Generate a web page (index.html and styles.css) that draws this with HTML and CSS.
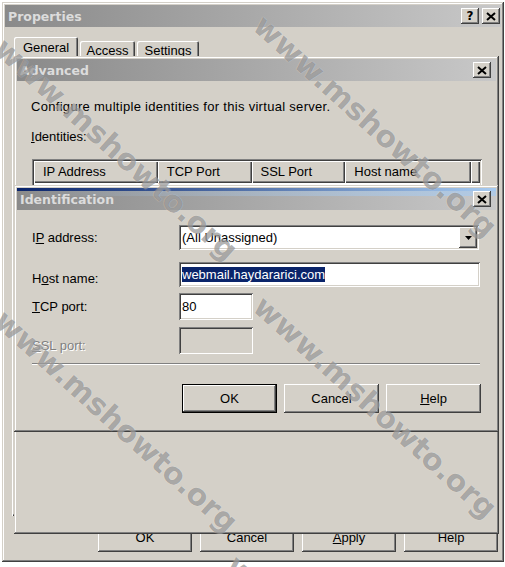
FILE: index.html
```html
<!DOCTYPE html>
<html>
<head>
<meta charset="utf-8">
<title>Properties</title>
<link rel="stylesheet" href="styles.css">
</head>
<body>
<div class="desktop">

  <div class="win win-props">
    <div class="title title-inactive title-props">
      <span class="title-text">Properties</span>
      <div class="title-btns">
        <span class="tbtn"><span class="qmark">?</span></span>
        <span class="tbtn"><svg class="xglyph" viewBox="0 0 10 9" width="10" height="9"><path d="M1 1 L9 8 M9 1 L1 8" stroke="#000" stroke-width="2" fill="none"/></svg></span>
      </div>
    </div>
    <div class="tabs">
      <div class="tab tab-sel tab-general">General</div>
      <div class="tab tab-access">Access</div>
      <div class="tab tab-settings">Settings</div>
    </div>
    <div class="tabpage"></div>
    <div class="props-btns">
      <div class="btn btn-props">OK</div>
      <div class="btn btn-props">Cancel</div>
      <div class="btn btn-props"><span><u>A</u>pply</span></div>
      <div class="btn btn-props">Help</div>
    </div>
  </div>

  <div class="win win-adv">
    <div class="title title-inactive title-sub">
      <span class="title-text">Advanced</span>
      <div class="title-btns">
        <span class="tbtn"><svg class="xglyph" viewBox="0 0 10 9" width="10" height="9"><path d="M1 1 L9 8 M9 1 L1 8" stroke="#000" stroke-width="2" fill="none"/></svg></span>
      </div>
    </div>
    <div class="adv-body">
      <div class="adv-text">Configure multiple identities for this virtual server.</div>
      <div class="adv-ident"><u>I</u>dentities:</div>
      <div class="list">
        <div class="lv-head">
          <div class="lv-col lv-ip">IP Address</div>
          <div class="lv-col lv-tcp">TCP Port</div>
          <div class="lv-col lv-ssl">SSL Port</div>
          <div class="lv-col lv-host">Host name</div>
          <div class="lv-col lv-rest"></div>
        </div>
      </div>
    </div>
  </div>

  <div class="win win-ident">
    <div class="title title-ident title-sub">
      <span class="title-text">Identification</span>
      <div class="title-btns">
        <span class="tbtn"><svg class="xglyph" viewBox="0 0 10 9" width="10" height="9"><path d="M1 1 L9 8 M9 1 L1 8" stroke="#000" stroke-width="2" fill="none"/></svg></span>
      </div>
    </div>
    <div class="form">
      <div class="row row-ip">
        <span class="lbl">I<u>P</u> address:</span>
        <div class="field combo">
          <span class="ftext">(All Unassigned)</span>
          <span class="drop"><svg viewBox="0 0 7 4" width="7" height="4"><path d="M0 0 H7 L3.5 4 Z" fill="#000"/></svg></span>
        </div>
      </div>
      <div class="row row-host">
        <span class="lbl">H<u>o</u>st name:</span>
        <div class="field host"><span class="sel">webmail.haydararici.com</span></div>
      </div>
      <div class="row row-tcp">
        <span class="lbl"><u>T</u>CP port:</span>
        <div class="field port">80</div>
      </div>
      <div class="row row-ssl">
        <span class="lbl lbl-dis"><u>S</u>SL port:</span>
        <div class="field port field-dis"></div>
      </div>
    </div>
    <div class="sep"></div>
    <div class="ident-btns">
      <div class="btn btn-ident btn-default">OK</div>
      <div class="btn btn-ident">Cancel</div>
      <div class="btn btn-ident"><span><u>H</u>elp</span></div>
    </div>
  </div>

  <div class="wm wm-a">www.mshowto.org</div>
  <div class="wm wm-b">www.mshowto.org</div>
  <div class="wm wm-c">www.mshowto.org</div>
  <div class="wm wm-d">www.mshowto.org</div>
  <div class="wm wm-e">www.mshowto.org</div>
</div>
</body>
</html>
```

FILE: styles.css
```css
* { box-sizing: border-box; }

body {
  margin: 0;
  background: #fff;
  font-family: "Liberation Sans", Arial, sans-serif;
  font-size: 13px;
  color: #000;
}

.desktop {
  position: relative;
  width: 505px;
  height: 567px;
  overflow: hidden;
  background: #fff;
}

/* ---------- windows ---------- */
.win {
  position: absolute;
  background: #d4d0c8;
  padding: 3px;
  display: flex;
  flex-direction: column;
  box-shadow:
    inset -1px -1px 0 #404040,
    inset 1px 1px 0 #d4d0c8,
    inset -2px -2px 0 #808080,
    inset 2px 2px 0 #ffffff;
}
.win-props { left: 2px; top: 2px; width: 502px; height: 560px; }
.win-adv   { left: 14px; top: 56px; width: 485px; height: 478px; }
.win-ident { left: 14px; top: 185px; width: 485px; height: 247px; }

.title {
  flex: none;
  height: 22px;
  display: flex;
  align-items: center;
  padding: 0 1px 0 3px;
}
.title-sub { padding-right: 5px; }
.title-inactive {
  background: linear-gradient(90deg, #8a8a8a, #c8c8c8);
}
.title-ident {
  background:
    linear-gradient(90deg, #0a246a, #a6caf0) top left / 100% 3px no-repeat,
    linear-gradient(90deg, rgba(166, 202, 240, 0), rgba(166, 202, 240, 0.7)) 0 3px / 100% 5px no-repeat,
    linear-gradient(90deg, #8a8a8a, #c8c8c8);
}
.title-text {
  font-family: "DejaVu Sans", sans-serif;
  font-weight: bold;
  font-size: 12.5px;
  color: #dcdcdc;
  padding-top: 1px;
}
.title-btns {
  margin-left: auto;
  display: flex;
  gap: 3px;
}
.tbtn {
  width: 18px;
  height: 16px;
  background: #d4d0c8;
  display: flex;
  align-items: center;
  justify-content: center;
  box-shadow:
    inset -1px -1px 0 #404040,
    inset 1px 1px 0 #ffffff,
    inset -2px -2px 0 #808080;
}
.qmark {
  font-family: "DejaVu Sans", sans-serif;
  font-weight: bold;
  font-size: 12px;
  line-height: 12px;
}

/* ---------- tabs ---------- */
.tabs {
  flex: none;
  display: flex;
  align-items: flex-end;
  height: 23px;
  margin: 10px 0 -2px 9px;
  gap: 2px;
}
.tab {
  height: 19px;
  display: flex;
  align-items: center;
  justify-content: center;
  border-radius: 2px 2px 0 0;
  box-shadow:
    inset 1px 1px 0 #ffffff,
    inset -1px 0 0 #404040,
    inset -2px 0 0 #808080;
}
.tab-sel { height: 23px; padding-bottom: 2px; }
.tab-general { width: 64px; }
.tab-access { width: 55px; }
.tab-settings { width: 62px; }

.tabpage {
  flex: 1;
  margin: 0 4px 0 7px;
  box-shadow:
    inset 1px 1px 0 #ffffff,
    inset -1px -1px 0 #404040,
    inset -2px -2px 0 #808080;
}

/* ---------- buttons ---------- */
.btn {
  display: flex;
  align-items: center;
  justify-content: center;
  background: #d4d0c8;
  box-shadow:
    inset -1px -1px 0 #404040,
    inset 1px 1px 0 #ffffff,
    inset -2px -2px 0 #808080;
}
.btn-props { width: 94px; height: 30px; }
.btn-ident { width: 95px; height: 29px; }
.btn-default {
  box-shadow:
    inset 0 0 0 1px #000000,
    inset -2px -2px 0 #404040,
    inset 2px 2px 0 #ffffff,
    inset -3px -3px 0 #808080;
}
.props-btns {
  flex: none;
  display: flex;
  justify-content: flex-end;
  gap: 8px;
  padding: 6px 3px 7px 0;
}

/* ---------- advanced ---------- */
.adv-body { padding: 18px 14px 0 14px; }
.adv-text { line-height: 16px; letter-spacing: 0.3px; }
.adv-ident { line-height: 16px; margin-top: 14px; }
.list {
  margin: 14px 0 0 1px;
  width: 450px;
  height: 200px;
  padding: 2px;
  background: #fff;
  box-shadow:
    inset 1px 1px 0 #808080,
    inset -1px -1px 0 #ffffff,
    inset 2px 2px 0 #404040,
    inset -2px -2px 0 #d4d0c8;
}
.lv-head { display: flex; height: 22px; }
.lv-col {
  background: #d4d0c8;
  line-height: 22px;
  padding-left: 9px;
  white-space: nowrap;
  box-shadow:
    inset 1px 1px 0 #ffffff,
    inset -1px -1px 0 #404040,
    inset -2px -2px 0 #808080;
}
.lv-ip { width: 124px; }
.lv-tcp { width: 94px; }
.lv-ssl { width: 94px; }
.lv-host { width: 126px; }
.lv-rest { flex: 1; }

/* ---------- identification ---------- */
.form {
  display: flex;
  flex-direction: column;
  padding: 15px 15px 0 15px;
}
.row { display: flex; }
.row-ip { height: 25px; align-items: center; }
.row-host { height: 25px; margin-top: 12px; align-items: flex-end; }
.row-tcp { height: 27px; margin-top: 6px; align-items: center; }
.row-ssl { height: 27px; margin-top: 7px; align-items: flex-end; }
.lbl { width: 147px; line-height: 16px; flex: none; }
.lbl-dis { color: #808080; text-shadow: 1px 1px 0 #ffffff; }
.field {
  height: 100%;
  background: #fff;
  display: flex;
  align-items: center;
  padding: 0 2px 0 3px;
  box-shadow:
    inset 1px 1px 0 #808080,
    inset -1px -1px 0 #ffffff,
    inset 2px 2px 0 #404040,
    inset -2px -2px 0 #d4d0c8;
}
.combo { width: 300px; }
.drop {
  margin-left: auto;
  width: 18px;
  height: 21px;
  background: #d4d0c8;
  display: flex;
  align-items: center;
  justify-content: center;
  box-shadow:
    inset -1px -1px 0 #404040,
    inset 1px 1px 0 #ffffff,
    inset -2px -2px 0 #808080;
}
.host { width: 301px; }
.sel { background: #0a246a; color: #fff; line-height: 15px; }
.port { width: 74px; }
.field-dis { background: #d4d0c8; }

.sep {
  height: 2px;
  margin: 9px 16px 0 15px;
  border-top: 1px solid #808080;
  border-bottom: 1px solid #ffffff;
}
.ident-btns {
  display: flex;
  justify-content: flex-end;
  gap: 7px;
  margin: 19px 15px 0 0;
}

/* ---------- watermark ---------- */
.wm {
  position: absolute;
  font-family: "DejaVu Sans", sans-serif;
  font-weight: bold;
  font-size: 30px;
  line-height: 30px;
  white-space: nowrap;
  color: rgba(70, 70, 70, 0.42);
  text-shadow: 0 0 1px rgba(255, 255, 255, 0.6);
  transform-origin: 0 0;
  transform: rotate(42deg);
  pointer-events: none;
}
.wm-a { left: 9px; top: 33px; }
.wm-b { left: 268px; top: 10px; }
.wm-c { left: 9px; top: 305px; }
.wm-d { left: 268px; top: 291px; }
.wm-e { left: 241px; top: 550px; }
```
